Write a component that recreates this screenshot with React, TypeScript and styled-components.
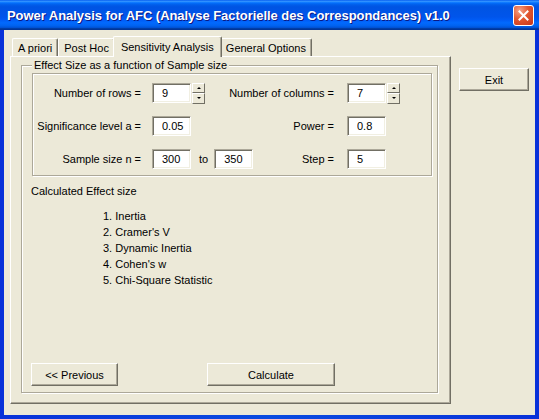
import React from 'react';
import styled, { createGlobalStyle } from 'styled-components';

const colors = {
  face: '#ECE9D8',
  shadow: '#ACA899',
  dark: '#716F64',
  light: '#FFFFFF',
  text: '#000000',
};

const GlobalStyle = createGlobalStyle`
  * {
    margin: 0;
    padding: 0;
    box-sizing: border-box;
  }
  html, body, #root {
    height: 100%;
  }
  body {
    font-family: "Liberation Sans", Arial, sans-serif;
    font-size: 11px;
    color: ${colors.text};
    background: ${colors.face};
    overflow: hidden;
  }
`;

const Window = styled.div`
  width: 539px;
  height: 419px;
  display: flex;
  flex-direction: column;
  background: linear-gradient(90deg, #0831D9 0%, #0A4BE0 50%, #0831D9 100%);
`;

const TitleBar = styled.div`
  height: 30px;
  flex-shrink: 0;
  display: flex;
  align-items: center;
  padding: 0 5px 0 7px;
  background: linear-gradient(180deg, #0058EE 0%, #3593FF 4%, #288EFF 6%, #127DFF 8%, #036FFC 10%,
    #0262EE 14%, #0057E5 20%, #0054E3 24%, #0055EB 56%, #005BF5 66%, #026AFE 76%,
    #0062EF 86%, #0052D6 92%, #0040AB 94%, #003092 100%);
`;

const TitleText = styled.div`
  color: #fff;
  font-weight: bold;
  font-size: 13px;
  letter-spacing: -0.05px;
  text-shadow: 1px 1px 0 #0A1883;
  white-space: nowrap;
`;

const CloseButton = styled.div`
  margin-left: auto;
  width: 21px;
  height: 21px;
  border: 1px solid #fff;
  border-radius: 3px;
  background: radial-gradient(circle at 30% 25%, #F5A48A 0%, #E2572F 45%, #C6341A 100%);
  display: flex;
  align-items: center;
  justify-content: center;
`;

const Client = styled.div`
  flex: 1;
  margin: 0 4px 4px 4px;
  background: ${colors.face};
  display: flex;
  padding: 6px 0 0 6px;
`;

const MainColumn = styled.div`
  width: 441px;
  display: flex;
  flex-direction: column;
`;

const SideColumn = styled.div`
  margin-left: 8px;
  padding-top: 32px;
  display: flex;
  flex-direction: column;
`;

const TabStrip = styled.div`
  height: 20px;
  display: flex;
  align-items: flex-end;
  padding-left: 2px;
  position: relative;
  z-index: 1;
`;

const Tab = styled.div<{ $active?: boolean }>`
  position: relative;
  z-index: ${({ $active }) => ($active ? 2 : 1)};
  height: ${({ $active }) => ($active ? '21px' : '18px')};
  margin: ${({ $active }) => ($active ? '0 -2px -1px -2px' : '0')};
  padding: ${({ $active }) => ($active ? '1px 7px 0 7px' : '2px 5px 0 5px')};
  line-height: ${({ $active }) => ($active ? '18px' : '15px')};
  background: ${colors.face};
  border-top: 1px solid ${colors.light};
  border-left: 1px solid ${colors.light};
  border-right: 1px solid ${colors.dark};
  box-shadow: inset -1px 0 0 ${colors.shadow};
  border-radius: 2px 2px 0 0;
  white-space: nowrap;
`;

const TabPanel = styled.div`
  height: 348px;
  display: flex;
  flex-direction: column;
  padding: 8px 12px 10px 10px;
  border-top: 1px solid ${colors.light};
  border-left: 1px solid ${colors.light};
  border-right: 1px solid ${colors.dark};
  border-bottom: 1px solid ${colors.dark};
  box-shadow: inset -1px -1px 0 ${colors.shadow};
`;

const etched = `
  border: 1px solid ${colors.shadow};
  box-shadow: inset 1px 1px 0 ${colors.light}, 1px 1px 0 ${colors.light};
`;

const GroupBox = styled.div`
  position: relative;
  flex: 1;
  display: flex;
  flex-direction: column;
  padding: 7px 5px 6px 10px;
  ${etched}
`;

const GroupTitle = styled.span`
  position: absolute;
  top: -7px;
  left: 10px;
  padding: 0 2px;
  line-height: 13px;
  background: ${colors.face};
`;

const ParamFrame = styled.div`
  height: 103px;
  display: flex;
  flex-direction: column;
  gap: 13px;
  padding: 9px 29px 0 0;
  ${etched}
`;

const ParamRow = styled.div`
  height: 20px;
  display: flex;
  align-items: center;
`;

const LeftLabel = styled.div`
  width: 119px;
  padding-right: 11px;
  text-align: right;
  white-space: nowrap;
`;

const RightLabel = styled.div`
  flex: 1;
  padding-right: 13px;
  text-align: right;
  white-space: nowrap;
`;

const Slot = styled.div`
  width: 16px;
  display: flex;
`;

const Field = styled.input`
  width: 39px;
  height: 20px;
  flex-shrink: 0;
  background: #fff;
  font: inherit;
  color: ${colors.text};
  padding-left: 9px;
  outline: none;
  border-top: 1px solid ${colors.shadow};
  border-left: 1px solid ${colors.shadow};
  border-right: 1px solid ${colors.light};
  border-bottom: 1px solid ${colors.light};
  box-shadow: inset 1px 1px 0 ${colors.dark}, inset -1px -1px 0 #F1EFE2;
`;

const Spinner = styled.div`
  width: 13px;
  height: 21px;
  margin-left: 1px;
  display: flex;
  flex-direction: column;
`;

const SpinButton = styled.div<{ $down?: boolean }>`
  flex: 1;
  display: flex;
  align-items: center;
  justify-content: center;
  background: ${colors.face};
  border-top: 1px solid ${colors.light};
  border-left: 1px solid ${colors.light};
  border-right: 1px solid ${colors.dark};
  border-bottom: 1px solid ${colors.dark};

  &::after {
    content: '';
    width: 0;
    height: 0;
    border-left: 2px solid transparent;
    border-right: 2px solid transparent;
    ${({ $down }) => ($down ? 'border-top: 2px solid #000;' : 'border-bottom: 2px solid #000;')}
  }
`;

const RangeCell = styled.div`
  display: flex;
  align-items: center;
  gap: 6px;
  padding-left: 8px;
`;

const SectionLabel = styled.div`
  margin-top: 8px;
  margin-left: -1px;
  line-height: 14px;
`;

const MeasureList = styled.div`
  margin-top: 10px;
  padding-left: 71px;
  line-height: 16px;
`;

const ButtonRow = styled.div`
  margin-top: auto;
  margin-left: -1px;
  display: flex;
  gap: 89px;
`;

const Button = styled.button<{ $width: number }>`
  width: ${({ $width }) => $width}px;
  height: 23px;
  font: inherit;
  color: ${colors.text};
  background: ${colors.face};
  border-top: 1px solid ${colors.light};
  border-left: 1px solid ${colors.light};
  border-right: 1px solid ${colors.dark};
  border-bottom: 1px solid ${colors.dark};
  box-shadow: inset -1px -1px 0 ${colors.shadow};
`;

const SpinBox: React.FC = () => (
  <Spinner>
    <SpinButton />
    <SpinButton $down />
  </Spinner>
);

const measures = ['Inertia', "Cramer's V", 'Dynamic Inertia', "Cohen's w", 'Chi-Square Statistic'];
const tabs = ['A priori', 'Post Hoc', 'Sensitivity Analysis', 'General Options'];

const App: React.FC = () => {
  return (
    <>
      <GlobalStyle />
      <Window>
        <TitleBar>
          <TitleText>Power Analysis for AFC (Analyse Factorielle des Correspondances) v1.0</TitleText>
          <CloseButton>
            <svg width="11" height="11" viewBox="0 0 11 11">
              <path d="M1.5 1.5 L9.5 9.5 M9.5 1.5 L1.5 9.5" stroke="#fff" strokeWidth="2" strokeLinecap="square" />
            </svg>
          </CloseButton>
        </TitleBar>
        <Client>
          <MainColumn>
            <TabStrip>
              {tabs.map((t) => (
                <Tab key={t} $active={t === 'Sensitivity Analysis'}>{t}</Tab>
              ))}
            </TabStrip>
            <TabPanel>
              <GroupBox>
                <GroupTitle>Effect Size as a function of Sample size</GroupTitle>
                <ParamFrame>
                  <ParamRow>
                    <LeftLabel>Number of rows =</LeftLabel>
                    <Field readOnly value="9" />
                    <SpinBox />
                    <RightLabel>Number of columns =</RightLabel>
                    <Field readOnly value="7" />
                    <Slot><SpinBox /></Slot>
                  </ParamRow>
                  <ParamRow>
                    <LeftLabel>Significance level a =</LeftLabel>
                    <Field readOnly value="0.05" />
                    <RightLabel>Power =</RightLabel>
                    <Field readOnly value="0.8" />
                    <Slot />
                  </ParamRow>
                  <ParamRow>
                    <LeftLabel>Sample size n =</LeftLabel>
                    <Field readOnly value="300" />
                    <RangeCell>
                      <span>to</span>
                      <Field readOnly value="350" />
                    </RangeCell>
                    <RightLabel>Step =</RightLabel>
                    <Field readOnly value="5" />
                    <Slot />
                  </ParamRow>
                </ParamFrame>
                <SectionLabel>Calculated Effect size</SectionLabel>
                <MeasureList>
                  {measures.map((m, i) => (
                    <div key={m}>{`${i + 1}. ${m}`}</div>
                  ))}
                </MeasureList>
                <ButtonRow>
                  <Button $width={87}>&lt;&lt; Previous</Button>
                  <Button $width={128}>Calculate</Button>
                </ButtonRow>
              </GroupBox>
            </TabPanel>
          </MainColumn>
          <SideColumn>
            <Button $width={70}>Exit</Button>
          </SideColumn>
        </Client>
      </Window>
    </>
  );
};

export default App;
